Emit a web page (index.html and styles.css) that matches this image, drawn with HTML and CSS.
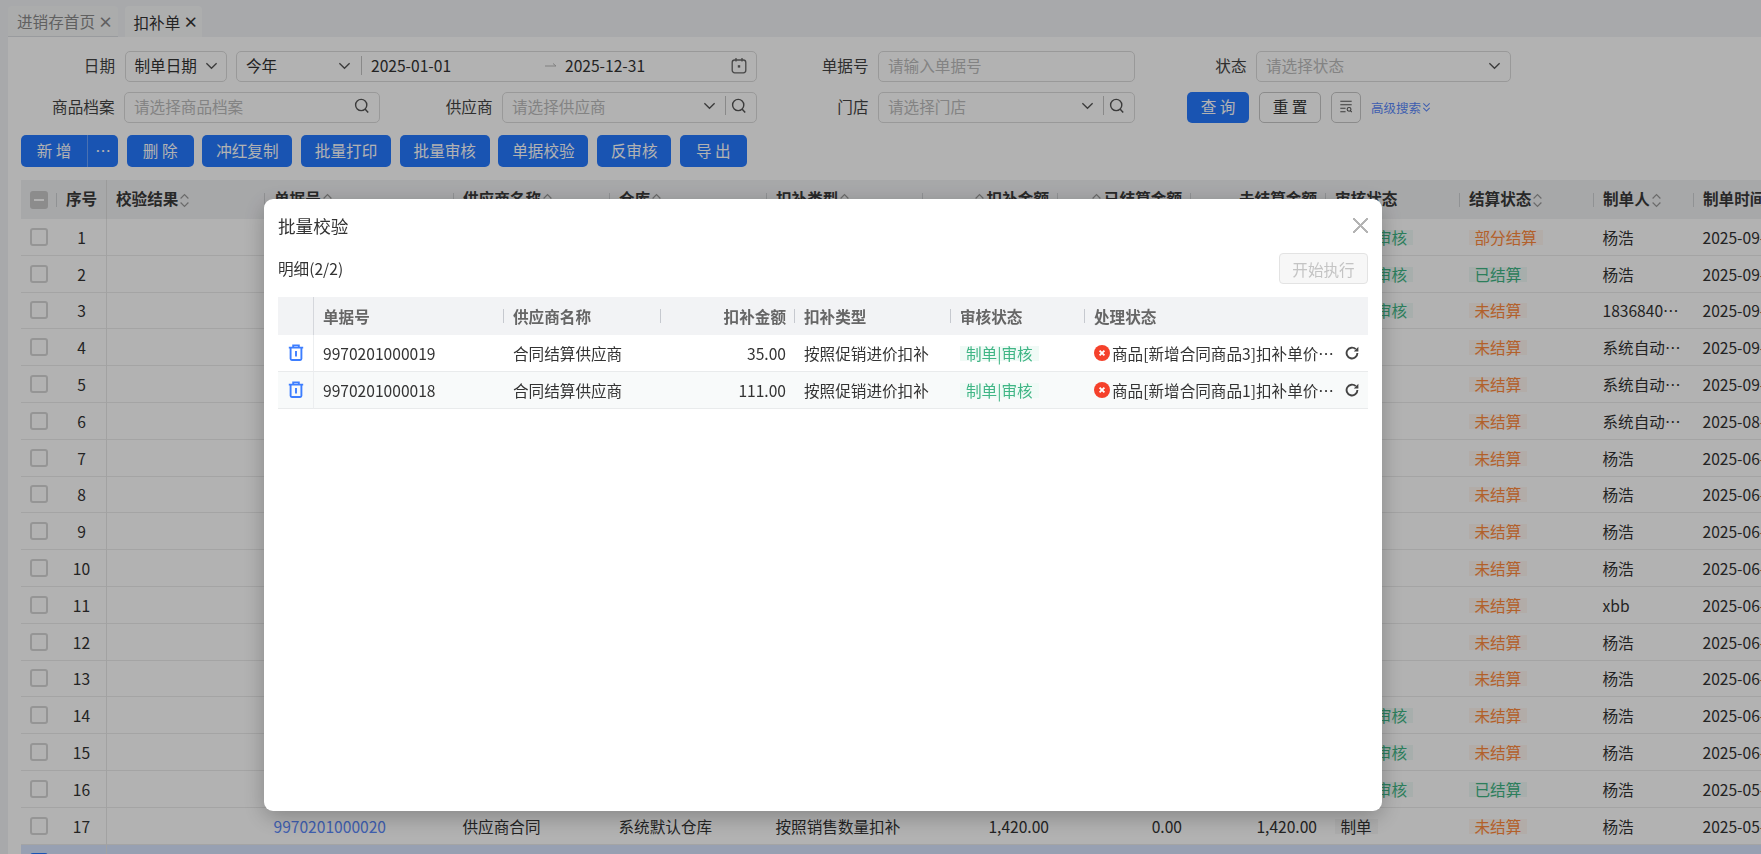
FILE: index.html
```html
<!DOCTYPE html>
<html lang="zh-CN">
<head>
<meta charset="utf-8">
<title>扣补单</title>
<link rel="stylesheet" href="styles.css">
</head>
<body>
<svg class="defs" aria-hidden="true">
  <symbol id="i-search" viewBox="0 0 16 16"><circle cx="7.2" cy="7" r="5.6" fill="none" stroke="currentColor" stroke-width="1.4"/><path d="M11 11l3.2 3.4" fill="none" stroke="currentColor" stroke-width="1.5"/></symbol>
  <symbol id="i-chev" viewBox="0 0 14 14"><path d="M1.5 4.5L7 10l5.5-5.5" fill="none" stroke="currentColor" stroke-width="1.4"/></symbol>
  <symbol id="i-sort" viewBox="0 0 9 15"><path d="M.6 5.5L4.5 1.6 8.4 5.5M.6 9.5L4.5 13.4 8.4 9.5" fill="none" stroke="currentColor" stroke-width="1.2"/></symbol>
  <symbol id="i-up" viewBox="0 0 9 15"><path d="M.6 5.5L4.5 1.6 8.4 5.5" fill="none" stroke="currentColor" stroke-width="1.2"/></symbol>
  <symbol id="i-cal" viewBox="0 0 16 17"><rect x="1.2" y="3" width="13.6" height="12.8" rx="2.5" fill="none" stroke="currentColor" stroke-width="1.3"/><path d="M5 1v3.4M11 1v3.4" stroke="currentColor" stroke-width="1.3"/><rect x="6.8" y="8.2" width="2.4" height="2.4" fill="currentColor"/></symbol>
  <symbol id="i-arrow" viewBox="0 0 12 8"><path d="M0 5h11L8 2.5" fill="none" stroke="currentColor" stroke-width="1"/></symbol>
  <symbol id="i-filter" viewBox="0 0 16 16"><path d="M1.5 2.5h13M1.5 6.5h13M1.5 10.5h6M1.5 14.5h6" stroke="currentColor" stroke-width="1.2"/><circle cx="11.5" cy="11.8" r="2.2" fill="none" stroke="currentColor" stroke-width="1.2"/><path d="M13 13.4l1.6 1.6" stroke="currentColor" stroke-width="1.2"/></symbol>
  <symbol id="i-dbl" viewBox="0 0 10 12"><path d="M1.5 1.5L5 5l3.5-3.5M1.5 6.5L5 10l3.5-3.5" fill="none" stroke="currentColor" stroke-width="1.2"/></symbol>
  <symbol id="i-trash" viewBox="0 0 16 17"><path d="M5.2 3.2V1.4h5.6v1.8M.8 3.6h14.4M2.6 3.6v11.2a1.2 1.2 0 0 0 1.2 1.2h8.4a1.2 1.2 0 0 0 1.2-1.2V3.6M8 7v5.5" fill="none" stroke="currentColor" stroke-width="1.9"/></symbol>
  <symbol id="i-err" viewBox="0 0 16 16"><circle cx="8" cy="8" r="8" fill="#f5412b"/><path d="M5.6 5.6l4.8 4.8M10.4 5.6l-4.8 4.8" stroke="#fff" stroke-width="1.9"/></symbol>
  <symbol id="i-reload" viewBox="0 0 14 14"><path d="M10.8 3.2A5.4 5.4 0 1 0 12.4 7" fill="none" stroke="currentColor" stroke-width="1.9"/><path d="M8.8 5.4h4.6V.8z" fill="currentColor"/></symbol>
</svg>

<div class="app">
  <nav class="tabs">
    <div class="tab">进销存首页<span class="tab-x">×</span></div>
    <div class="tab tab-active">扣补单<span class="tab-x">×</span></div>
  </nav>

  <main class="content">
    <section class="filters">
      <div class="field field-wide">
        <label class="lbl">日期</label>
        <div class="ctl ctl-type"><span class="val">制单日期</span><svg class="ic chev"><use href="#i-chev"/></svg></div>
        <div class="ctl ctl-range">
          <span class="val range-preset">今年</span><svg class="ic chev"><use href="#i-chev"/></svg><i class="vsep vsep-range"></i>
          <span class="val range-date">2025-01-01</span><svg class="ic-arrow"><use href="#i-arrow"/></svg>
          <span class="val">2025-12-31</span><svg class="ic-cal"><use href="#i-cal"/></svg>
        </div>
      </div>
      <div class="field">
        <label class="lbl">单据号</label>
        <div class="ctl ctl-257"><span class="ph">请输入单据号</span></div>
      </div>
      <div class="field">
        <label class="lbl">状态</label>
        <div class="ctl ctl-255"><span class="ph">请选择状态</span><svg class="ic chev"><use href="#i-chev"/></svg></div>
      </div>
      <div class="field">
        <label class="lbl">商品档案</label>
        <div class="ctl ctl-256"><span class="ph">请选择商品档案</span><svg class="ic search"><use href="#i-search"/></svg></div>
      </div>
      <div class="field">
        <label class="lbl">供应商</label>
        <div class="ctl ctl-255"><span class="ph">请选择供应商</span><svg class="ic chev"><use href="#i-chev"/></svg><i class="vsep"></i><svg class="ic search"><use href="#i-search"/></svg></div>
      </div>
      <div class="field">
        <label class="lbl">门店</label>
        <div class="ctl ctl-257"><span class="ph">请选择门店</span><svg class="ic chev"><use href="#i-chev"/></svg><i class="vsep"></i><svg class="ic search"><use href="#i-search"/></svg></div>
      </div>
      <div class="actions">
        <button class="btn btn-primary btn-q">查 询</button>
        <button class="btn btn-ghost btn-q">重 置</button>
        <button class="btn btn-ghost btn-icon"><svg class="ic-filter"><use href="#i-filter"/></svg></button>
        <a class="adv">高级搜索<svg class="ic-dbl"><use href="#i-dbl"/></svg></a>
      </div>
    </section>

    <section class="toolbar">
      <div class="btn-split"><span class="split-main">新 增</span><span class="split-more">…</span></div>
      <button class="btn btn-primary w67">删 除</button>
      <button class="btn btn-primary w90">冲红复制</button>
      <button class="btn btn-primary w90">批量打印</button>
      <button class="btn btn-primary w90">批量审核</button>
      <button class="btn btn-primary w90">单据校验</button>
      <button class="btn btn-primary w74">反审核</button>
      <button class="btn btn-primary w67">导 出</button>
    </section>

    <section class="grid-wrap">
      <table class="grid">
        <colgroup><col class="c36"><col class="c50"><col class="c158"><col class="c189"><col class="c156"><col class="c157"><col class="c156"><col class="c135"><col class="c133"><col class="c135"><col class="c134"><col class="c134"><col class="c100"><col class="c180"></colgroup>
        <thead>
          <tr>
            <th class="tc-check"><span class="cb cb-mixed"></span></th>
            <th class="tc-num">序号</th>
            <th>校验结果<svg class="sort"><use href="#i-sort"/></svg></th>
            <th>单据号<svg class="sort"><use href="#i-up"/></svg></th>
            <th>供应商名称<svg class="sort"><use href="#i-up"/></svg></th>
            <th>仓库<svg class="sort"><use href="#i-up"/></svg></th>
            <th>扣补类型<svg class="sort"><use href="#i-up"/></svg></th>
            <th class="r"><svg class="sort sort-l"><use href="#i-up"/></svg>扣补金额</th>
            <th class="r"><svg class="sort sort-l"><use href="#i-up"/></svg>已结算金额</th>
            <th class="r">未结算金额</th>
            <th>审核状态</th>
            <th>结算状态<svg class="sort"><use href="#i-sort"/></svg></th>
            <th>制单人<svg class="sort"><use href="#i-sort"/></svg></th>
            <th>制单时间</th>
          </tr>
        </thead>
        <tbody>
          <tr><td><span class="cb"></span></td><td class="n">1</td><td></td><td></td><td></td><td></td><td></td><td></td><td></td><td></td><td><span class="tag tag-g">制单|审核</span></td><td><span class="tag tag-o">部分结算</span></td><td class="el">杨浩</td><td>2025-09-18 10:12:30</td></tr>
          <tr><td><span class="cb"></span></td><td class="n">2</td><td></td><td></td><td></td><td></td><td></td><td></td><td></td><td></td><td><span class="tag tag-g">制单|审核</span></td><td><span class="tag tag-g">已结算</span></td><td class="el">杨浩</td><td>2025-09-18 09:40:12</td></tr>
          <tr><td><span class="cb"></span></td><td class="n">3</td><td></td><td></td><td></td><td></td><td></td><td></td><td></td><td></td><td><span class="tag tag-g">制单|审核</span></td><td><span class="tag tag-o">未结算</span></td><td class="el">18368401234</td><td>2025-09-12 16:20:45</td></tr>
          <tr><td><span class="cb"></span></td><td class="n">4</td><td></td><td></td><td></td><td></td><td></td><td></td><td></td><td></td><td></td><td><span class="tag tag-o">未结算</span></td><td class="el">系统自动生成</td><td>2025-09-01 02:00:03</td></tr>
          <tr><td><span class="cb"></span></td><td class="n">5</td><td></td><td></td><td></td><td></td><td></td><td></td><td></td><td></td><td></td><td><span class="tag tag-o">未结算</span></td><td class="el">系统自动生成</td><td>2025-09-01 02:00:02</td></tr>
          <tr><td><span class="cb"></span></td><td class="n">6</td><td></td><td></td><td></td><td></td><td></td><td></td><td></td><td></td><td></td><td><span class="tag tag-o">未结算</span></td><td class="el">系统自动生成</td><td>2025-08-01 02:00:02</td></tr>
          <tr><td><span class="cb"></span></td><td class="n">7</td><td></td><td></td><td></td><td></td><td></td><td></td><td></td><td></td><td></td><td><span class="tag tag-o">未结算</span></td><td class="el">杨浩</td><td>2025-06-27 11:05:18</td></tr>
          <tr><td><span class="cb"></span></td><td class="n">8</td><td></td><td></td><td></td><td></td><td></td><td></td><td></td><td></td><td></td><td><span class="tag tag-o">未结算</span></td><td class="el">杨浩</td><td>2025-06-27 11:02:41</td></tr>
          <tr><td><span class="cb"></span></td><td class="n">9</td><td></td><td></td><td></td><td></td><td></td><td></td><td></td><td></td><td></td><td><span class="tag tag-o">未结算</span></td><td class="el">杨浩</td><td>2025-06-26 15:30:09</td></tr>
          <tr><td><span class="cb"></span></td><td class="n">10</td><td></td><td></td><td></td><td></td><td></td><td></td><td></td><td></td><td></td><td><span class="tag tag-o">未结算</span></td><td class="el">杨浩</td><td>2025-06-26 15:12:55</td></tr>
          <tr><td><span class="cb"></span></td><td class="n">11</td><td></td><td></td><td></td><td></td><td></td><td></td><td></td><td></td><td></td><td><span class="tag tag-o">未结算</span></td><td class="el">xbb</td><td>2025-06-20 10:01:33</td></tr>
          <tr><td><span class="cb"></span></td><td class="n">12</td><td></td><td></td><td></td><td></td><td></td><td></td><td></td><td></td><td></td><td><span class="tag tag-o">未结算</span></td><td class="el">杨浩</td><td>2025-06-18 14:22:07</td></tr>
          <tr><td><span class="cb"></span></td><td class="n">13</td><td></td><td></td><td></td><td></td><td></td><td></td><td></td><td></td><td></td><td><span class="tag tag-o">未结算</span></td><td class="el">杨浩</td><td>2025-06-18 14:20:40</td></tr>
          <tr><td><span class="cb"></span></td><td class="n">14</td><td></td><td></td><td></td><td></td><td></td><td></td><td></td><td></td><td><span class="tag tag-g">制单|审核</span></td><td><span class="tag tag-o">未结算</span></td><td class="el">杨浩</td><td>2025-06-12 09:48:16</td></tr>
          <tr><td><span class="cb"></span></td><td class="n">15</td><td></td><td></td><td></td><td></td><td></td><td></td><td></td><td></td><td><span class="tag tag-g">制单|审核</span></td><td><span class="tag tag-o">未结算</span></td><td class="el">杨浩</td><td>2025-06-12 09:30:02</td></tr>
          <tr><td><span class="cb"></span></td><td class="n">16</td><td></td><td></td><td></td><td></td><td></td><td></td><td></td><td></td><td><span class="tag tag-g">制单|审核</span></td><td><span class="tag tag-g">已结算</span></td><td class="el">杨浩</td><td>2025-05-29 17:11:24</td></tr>
          <tr><td><span class="cb"></span></td><td class="n">17</td><td></td><td><a class="link">9970201000020</a></td><td>供应商合同</td><td>系统默认仓库</td><td>按照销售数量扣补</td><td class="r">1,420.00</td><td class="r">0.00</td><td class="r">1,420.00</td><td><span class="tag tag-n">制单</span></td><td><span class="tag tag-o">未结算</span></td><td class="el">杨浩</td><td>2025-05-29 16:58:10</td></tr>
          <tr class="row-sel"><td><span class="cb cb-on"></span></td><td class="n"></td><td></td><td></td><td></td><td></td><td></td><td></td><td></td><td></td><td></td><td></td><td></td><td></td></tr>
        </tbody>
      </table>
    </section>
  </main>
</div>

<div class="overlay">
  <div class="modal">
    <header class="m-head"><h2 class="m-title">批量校验</h2><span class="m-close"></span></header>
    <div class="m-bar"><span class="m-count">明细(2/2)</span><button class="m-run">开始执行</button></div>
    <table class="m-grid">
      <colgroup><col class="m36"><col class="m190"><col class="m157"><col class="m134"><col class="m156"><col class="m134"><col class="m283"></colgroup>
      <thead>
        <tr><th class="m-op"></th><th>单据号</th><th>供应商名称</th><th class="r">扣补金额</th><th>扣补类型</th><th>审核状态</th><th class="nosep">处理状态</th></tr>
      </thead>
      <tbody>
        <tr>
          <td class="m-op"><svg class="ic-trash"><use href="#i-trash"/></svg></td>
          <td>9970201000019</td><td>合同结算供应商</td><td class="r">35.00</td><td>按照促销进价扣补</td>
          <td><span class="tag tag-g">制单|审核</span></td>
          <td><div class="proc"><svg class="ic-err"><use href="#i-err"/></svg><span class="proc-text">商品[新增合同商品3]扣补单价不能大于进价请核对</span><svg class="ic-reload"><use href="#i-reload"/></svg></div></td>
        </tr>
        <tr class="alt">
          <td class="m-op"><svg class="ic-trash"><use href="#i-trash"/></svg></td>
          <td>9970201000018</td><td>合同结算供应商</td><td class="r">111.00</td><td>按照促销进价扣补</td>
          <td><span class="tag tag-g">制单|审核</span></td>
          <td><div class="proc"><svg class="ic-err"><use href="#i-err"/></svg><span class="proc-text">商品[新增合同商品1]扣补单价不能大于进价请核对</span><svg class="ic-reload"><use href="#i-reload"/></svg></div></td>
        </tr>
      </tbody>
    </table>
  </div>
</div>
</body>
</html>
```

FILE: styles.css
```css
* { box-sizing: border-box; }
html, body { margin: 0; height: 854px; overflow: hidden; }
body { font-family: "Noto Sans CJK SC", "Noto Sans", sans-serif; font-size: 15.6px; color: #333; background: #f1f3f5; }
.defs { width: 0; height: 0; display: block; }
button { font: inherit; cursor: pointer; }

.app { height: 854px; display: flex; flex-direction: column; overflow: hidden; }
.tabs { height: 37px; flex: none; display: flex; align-items: flex-end; gap: 6.5px; padding-left: 8px; }
.tab { height: 31px; width: 110px; display: flex; align-items: center; padding-left: 9px; gap: 3px; color: #8a8a8a; background: #f5f6f7; border-radius: 4px 4px 0 0; border-bottom: 1px solid #dcdfe3; }
.tab-active { width: 77px; color: #333; background: #f8f9fa; border-bottom: 0; }
.tab-x { font-size: 15px; line-height: 1; font-weight: 700; }

.content { flex: 1; min-height: 0; margin-left: 8px; background: #fff; padding-top: 14px; overflow: hidden; }

.filters { display: grid; grid-template-columns: 372px 377px 378px 376px; grid-auto-rows: 31px; row-gap: 9.5px; }
.field { display: flex; align-items: center; gap: 9.5px; }
.field-wide { grid-column: span 2; }
.lbl { flex: 1; text-align: right; color: #444; white-space: nowrap; padding-bottom: 3px; }

.ctl { height: 31px; flex: none; display: flex; align-items: center; border: 1.5px solid #dcdcdc; border-radius: 5px; padding: 0 9px 3px; color: #333; background: #fff; white-space: nowrap; }
.ctl-type { width: 102px; }
.ctl-range { width: 521px; }
.ctl-257 { width: 257px; }
.ctl-256 { width: 256px; }
.ctl-255 { width: 255px; }
.ph { flex: 1; color: #bcbcbc; }
.val { flex: none; }
.range-preset { width: 92px; }
.range-date { width: 174px; }
.ic { flex: none; display: block; color: #555; }
.chev { width: 13px; height: 13px; }
.ctl-type .chev { margin-left: auto; margin-right: -1px; }
.search { width: 16px; height: 16px; }
.vsep { flex: none; width: 1px; height: 19px; background: #c4c4c4; margin: 0 5px 0 9px; }
.vsep-range { margin: 0 9px 0 10px; }
.ic-arrow { width: 12px; height: 8px; flex: none; color: #b9b9b9; margin-right: 8px; }
.ic-cal { width: 16px; height: 17px; flex: none; margin-left: auto; color: #666; }

.actions { display: flex; align-items: center; gap: 10px; padding-left: 52px; }
.btn { height: 31px; border-radius: 5px; padding: 0 0 2px; flex: none; display: flex; align-items: center; justify-content: center; }
.btn-primary { background: #2579ff; border: 0; color: #fff; }
.btn-ghost { background: #fff; border: 1.5px solid #c8c8c8; color: #333; }
.btn-q { width: 62px; }
.btn-icon { width: 30px; }
.ic-filter { width: 14px; height: 16px; color: #555; }
.adv { display: flex; align-items: center; font-size: 12.5px; color: #5a88fb; white-space: nowrap; }
.ic-dbl { width: 9px; height: 11px; margin-left: 1px; }

.toolbar { display: flex; gap: 8.7px; margin: 12.5px 0 13px 13px; height: 32px; }
.toolbar .btn { height: 32px; }
.w67 { width: 67px; } .w74 { width: 74px; } .w90 { width: 90px; }
.btn-split { width: 97px; display: flex; background: #2579ff; border-radius: 5px; color: #fff; align-items: center; }
.split-main { width: 67px; text-align: center; border-right: 1px solid #6aa3ff; line-height: 30px; height: 32px; }
.split-more { flex: 1; text-align: center; line-height: 30px; height: 32px; }

.grid-wrap { margin-left: 13px; overflow: hidden; }
.grid { width: 1853px; table-layout: fixed; border-collapse: separate; border-spacing: 0; }
.c36 { width: 36px; } .c50 { width: 50px; } .c158 { width: 158px; } .c189 { width: 189px; } .c156 { width: 156px; } .c157 { width: 157px; } .c135 { width: 135px; } .c133 { width: 133px; } .c134 { width: 134px; } .c100 { width: 100px; } .c180 { width: 180px; }
.grid th { height: 39px; padding: 0 9px 3px; text-align: left; font-weight: 700; color: #3a3a3a; background: #f0f1f3 linear-gradient(#cfd1d4, #cfd1d4) no-repeat right center / 1px 14px; white-space: nowrap; overflow: hidden; }
.grid td { height: 36.8px; padding: 0 8px 0 8.5px; border-bottom: 1px solid #ebebeb; white-space: nowrap; overflow: hidden; }
.grid th.r, .grid td.r { text-align: right; }
.grid .tc-check { padding: 0 0 0 9px; }
.grid .tc-num { padding: 0 0 3px; text-align: center; background-image: none; border-right: 1px solid #dedede; }
.grid td:first-child { padding: 0 0 0 9px; }
.grid td.n { padding: 0; text-align: center; border-right: 1px solid #e8e8e8; }
.grid td.r { padding-right: 9px; }
.grid td.el { text-overflow: ellipsis; }
.sort { width: 9px; height: 15px; margin-left: 2px; vertical-align: -3px; color: #999; }
.sort-l { margin: 0 3px 0 0; }
.row-sel td { background: #d9e6ff; }

.cb { display: block; width: 18px; height: 18px; border: 2px solid #d6d6d6; border-radius: 3px; background: #fff; }
.cb-mixed { background: #c9c9c9; border-color: #c9c9c9; display: flex; align-items: center; justify-content: center; }
.cb-mixed::before { content: ""; width: 10px; height: 2px; background: #fff; }
.cb-on { background: #2579ff; border-color: #2579ff; }
.link { color: #5a88fb; }

.tag { display: inline-block; height: 15px; line-height: 15px; padding: 0 6px; white-space: nowrap; }
.tag-g { color: #3fb585; background: #f0faf6; }
.tag-o { color: #ff8a3d; background: #fff7f1; }
.tag-n { color: #333; background: #f6f6f6; }

.overlay { position: fixed; inset: 0; background: rgba(0, 0, 0, .3); padding: 199px 0 0 264px; }
.modal { width: 1118px; height: 612px; background: #fff; border-radius: 9px; padding: 0 14px; box-shadow: 0 6px 22px rgba(0, 0, 0, .25); }
.m-head { height: 54px; padding-bottom: 2px; display: flex; align-items: center; justify-content: space-between; }
.m-title { margin: 0; font-size: 17.6px; font-weight: 400; color: #333; }
.m-close { width: 15px; height: 15px; background:
  linear-gradient(45deg, transparent 46%, #b4b4b4 46%, #b4b4b4 54%, transparent 54%),
  linear-gradient(-45deg, transparent 46%, #b4b4b4 46%, #b4b4b4 54%, transparent 54%); }
.m-bar { height: 31px; display: flex; align-items: center; justify-content: space-between; color: #333; margin-bottom: 13px; }
.m-count { padding-bottom: 2px; }
.m-run { width: 89px; height: 31px; padding: 0; background: #f7f7f7; border: 1px solid #e3e3e3; border-radius: 4px; color: #c4c4c4; }
.m-grid { width: 1090px; table-layout: fixed; border-collapse: separate; border-spacing: 0; }
.m36 { width: 36px; } .m190 { width: 190px; } .m157 { width: 157px; } .m134 { width: 134px; } .m156 { width: 156px; } .m283 { width: 283px; }
.m-grid th { height: 38px; padding: 0 9px; text-align: left; font-weight: 700; color: #666; background: #f2f3f5 linear-gradient(#c6c9cf, #c6c9cf) no-repeat right center / 1.5px 14px; white-space: nowrap; }
.m-grid th.r, .m-grid td.r { text-align: right; }
.m-grid th.nosep { background-image: none; }
.m-grid th.m-op { background-image: none; border-right: 1px solid #d5d7dc; padding: 0; }
.m-grid td { height: 37px; padding: 0 9px; border-bottom: 1px solid #e9ebec; color: #333; white-space: nowrap; }
.m-grid td.m-op { padding: 0; text-align: center; border-right: 1px solid #eceef0; }
.m-grid .alt td { background: #f8fafa; }
.ic-trash { width: 16px; height: 17px; display: block; margin: -1px auto 1px; color: #3d7eff; }
.proc { display: flex; align-items: center; }
.ic-err { width: 16px; height: 16px; flex: none; margin-right: 2px; }
.proc-text { flex: none; width: 223px; overflow: hidden; text-overflow: ellipsis; }
.ic-reload { width: 14px; height: 14px; flex: none; margin-left: 10px; color: #444; }
```
